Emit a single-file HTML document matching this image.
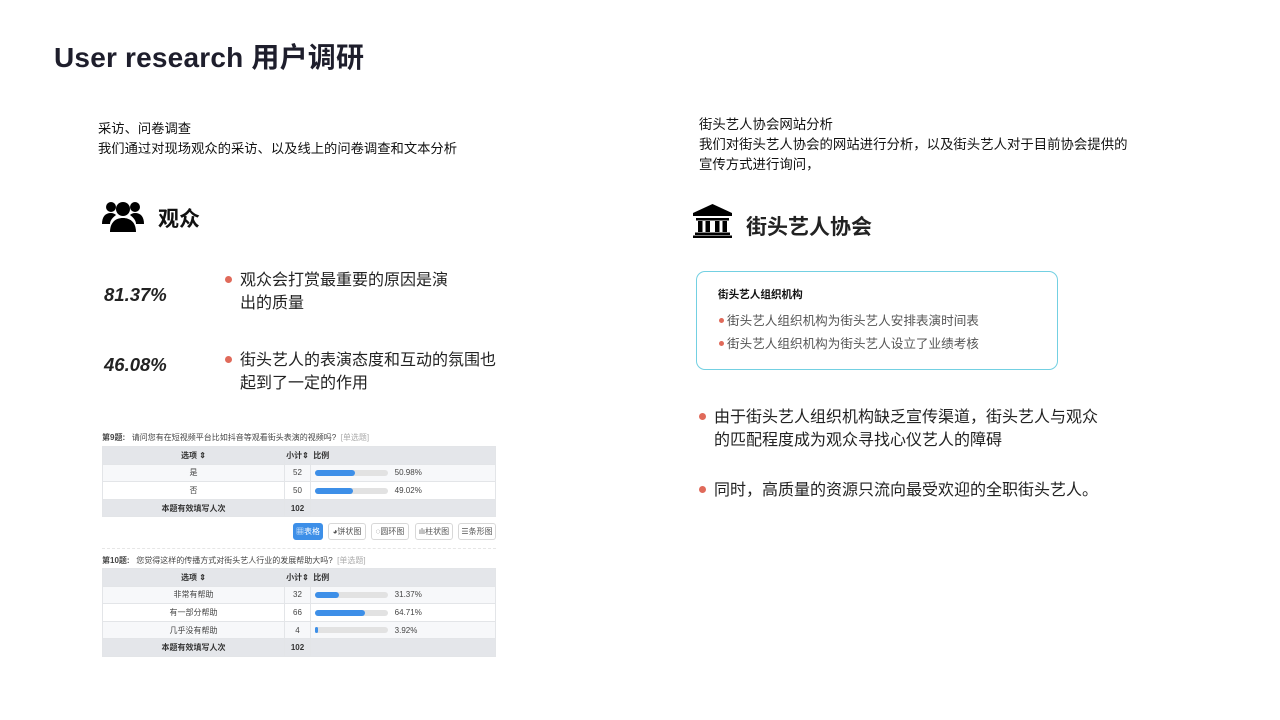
<!DOCTYPE html>
<html><head><meta charset="utf-8"><style>
*{margin:0;padding:0;box-sizing:border-box}
body{width:1280px;height:720px;background:#fff;position:relative;overflow:hidden;font-family:"Liberation Sans","Noto Sans CJK SC",sans-serif;color:#111}
.a{position:absolute;white-space:nowrap}
.dot{position:absolute;width:7px;height:7px;border-radius:50%;background:#e06a5a}
table{border-collapse:collapse;position:absolute;left:102px;width:394px;font-size:8px;color:#444}
td{height:17.6px;border:1px solid #e3e5e8;text-align:center}
tr.h td{background:#e4e6ea;font-weight:bold;color:#333}
tr.t td{background:#e4e6ea;font-weight:bold;color:#333}
.bar{display:inline-block;vertical-align:middle;width:73px;height:6px;border-radius:3px;background:#e2e2e2;position:relative;margin-left:4px}
.bar i{position:absolute;left:0;top:0;height:6px;border-radius:3px;background:#3d8fe8}
td.l{text-align:left}
.btn{position:absolute;top:523px;height:17px;border:1px solid #d8d8d8;border-radius:3px;font-size:8px;color:#555;line-height:15px;text-align:center}
</style></head><body>
<div class="a" style="left:54px;top:36px;font-size:28px;font-weight:bold;color:#1e1e2c;letter-spacing:0.2px">User research 用户调研</div>

<div class="a" style="left:98px;top:119px;font-size:13.3px;line-height:20px">采访、问卷调查<br>我们通过对现场观众的采访、以及线上的问卷调查和文本分析</div>

<svg class="a" style="left:102px;top:200px" width="42" height="32" viewBox="0 0 42 32"><circle cx="21" cy="9" r="7"/><path d="M8 32c0-9 5-14 13-14s13 5 13 14z"/><circle cx="9" cy="7" r="5"/><path d="M0 24c0-7 3-11 9-11 2 0 4 1 5 2-4 3-6 6-6 9z"/><circle cx="33" cy="7" r="5"/><path d="M42 24c0-7-3-11-9-11-2 0-4 1-5 2 4 3 6 6 6 9z"/></svg>
<div class="a" style="left:158px;top:203px;font-size:21px;font-weight:bold">观众</div>

<div class="a" style="left:104px;top:284px;font-size:18.5px;font-weight:bold;font-style:italic;color:#222">81.37%</div>
<div class="dot" style="left:225px;top:276px"></div>
<div class="a" style="left:240px;top:269px;font-size:16px;line-height:23px;color:#222">观众会打赏最重要的原因是演<br>出的质量</div>
<div class="a" style="left:104px;top:354px;font-size:18.5px;font-weight:bold;font-style:italic;color:#222">46.08%</div>
<div class="dot" style="left:225px;top:356px"></div>
<div class="a" style="left:240px;top:349px;font-size:16px;line-height:23px;color:#222">街头艺人的表演态度和互动的氛围也<br>起到了一定的作用</div>

<div class="a" style="left:102px;top:432px;font-size:8px;color:#444"><b>第9题:</b>&nbsp;&nbsp; 请问您有在短视频平台比如抖音等观看街头表演的视频吗? &nbsp;<span style="color:#aaa">[单选题]</span></div>
<table style="top:446px">
<colgroup><col style="width:182px"><col style="width:26px"><col></colgroup>
<tr class="h"><td>选项 ⇕</td><td>小计⇕</td><td class="l">&nbsp;比例</td></tr>
<tr style="background:#f7f8fa"><td>是</td><td>52</td><td class="l"><span class="bar"><i style="width:40px"></i></span>&nbsp;&nbsp;&nbsp;50.98%</td></tr>
<tr><td>否</td><td>50</td><td class="l"><span class="bar"><i style="width:38px"></i></span>&nbsp;&nbsp;&nbsp;49.02%</td></tr>
<tr class="t"><td>本题有效填写人次</td><td>102</td><td></td></tr>
</table>
<div class="btn" style="left:293px;width:30px;background:#3d8fe8;border-color:#3d8fe8;color:#fff">▦表格</div>
<div class="btn" style="left:328px;width:38px">◕饼状图</div>
<div class="btn" style="left:371px;width:38px">◌圆环图</div>
<div class="btn" style="left:415px;width:38px">ılı柱状图</div>
<div class="btn" style="left:458px;width:38px">☰条形图</div>
<div class="a" style="left:102px;top:548px;width:394px;border-top:1px dashed #e6e6e6"></div>
<div class="a" style="left:102px;top:555px;font-size:8px;color:#444"><b>第10题:</b>&nbsp;&nbsp; 您觉得这样的传播方式对街头艺人行业的发展帮助大吗? &nbsp;<span style="color:#aaa">[单选题]</span></div>
<table style="top:568px">
<colgroup><col style="width:182px"><col style="width:26px"><col></colgroup>
<tr class="h"><td>选项 ⇕</td><td>小计⇕</td><td class="l">&nbsp;比例</td></tr>
<tr style="background:#f7f8fa"><td>非常有帮助</td><td>32</td><td class="l"><span class="bar"><i style="width:24px"></i></span>&nbsp;&nbsp;&nbsp;31.37%</td></tr>
<tr><td>有一部分帮助</td><td>66</td><td class="l"><span class="bar"><i style="width:50px"></i></span>&nbsp;&nbsp;&nbsp;64.71%</td></tr>
<tr style="background:#f7f8fa"><td>几乎没有帮助</td><td>4</td><td class="l"><span class="bar"><i style="width:3px"></i></span>&nbsp;&nbsp;&nbsp;3.92%</td></tr>
<tr class="t"><td>本题有效填写人次</td><td>102</td><td></td></tr>
</table>

<div class="a" style="left:699px;top:115px;font-size:13.4px;line-height:20px">街头艺人协会网站分析<br>我们对街头艺人协会的网站进行分析，以及街头艺人对于目前协会提供的<br>宣传方式进行询问，</div>

<svg class="a" style="left:692px;top:204px" width="41" height="34" viewBox="0 0 41 34"><path d="M20.5 0L1 9v3h39V9z"/><rect x="4" y="14" width="33" height="2.5"/><rect x="6" y="17" width="4.5" height="11"/><rect x="13.5" y="17" width="4.5" height="11"/><rect x="23" y="17" width="4.5" height="11"/><rect x="30.5" y="17" width="4.5" height="11"/><rect x="3" y="28.5" width="35" height="2.5"/><rect x="1" y="31.5" width="39" height="2.5"/></svg>
<div class="a" style="left:746px;top:211px;font-size:21px;font-weight:bold;color:#222">街头艺人协会</div>

<div class="a" style="left:696px;top:271px;width:362px;height:99px;border:1.5px solid #73d0e2;border-radius:9px"></div>
<div class="a" style="left:718px;top:287px;font-size:10.6px;font-weight:bold">街头艺人组织机构</div>
<div class="dot" style="left:719px;top:318px;width:5px;height:5px"></div>
<div class="a" style="left:727px;top:310px;font-size:12.6px;color:#555">街头艺人组织机构为街头艺人安排表演时间表</div>
<div class="dot" style="left:719px;top:341px;width:5px;height:5px"></div>
<div class="a" style="left:727px;top:333px;font-size:12.6px;color:#555">街头艺人组织机构为街头艺人设立了业绩考核</div>

<div class="dot" style="left:699px;top:413px"></div>
<div class="a" style="left:714px;top:406px;font-size:16px;line-height:23px;color:#222">由于街头艺人组织机构缺乏宣传渠道，街头艺人与观众<br>的匹配程度成为观众寻找心仪艺人的障碍</div>
<div class="dot" style="left:699px;top:486px"></div>
<div class="a" style="left:714px;top:479px;font-size:16px;line-height:23px;color:#222">同时，高质量的资源只流向最受欢迎的全职街头艺人。</div>
</body></html>
